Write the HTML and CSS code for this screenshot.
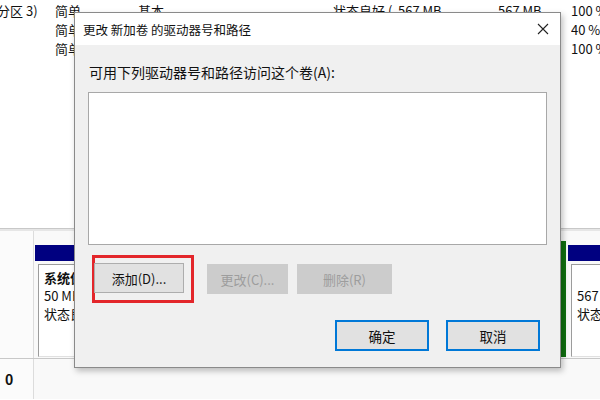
FILE: index.html
```html
<!DOCTYPE html>
<html lang="zh-CN">
<head>
<meta charset="utf-8">
<link rel="stylesheet" href="styles.css">
</head>
<body>
<div class="screen">
  <div class="vollist">
    <div class="vrow">
      <span class="c1">分区 3)</span><span class="c2">简单</span><span class="c3">基本</span><span class="c4">状态良好 (</span><span class="c5">567 MB</span><span class="c6">567 MB</span><span class="c7">100 %</span>
    </div>
    <div class="vrow">
      <span class="c1"></span><span class="c2">简单</span><span class="c3"></span><span class="c4"></span><span class="c5"></span><span class="c6"></span><span class="c7">40 %</span>
    </div>
    <div class="vrow">
      <span class="c1"></span><span class="c2">简单</span><span class="c3"></span><span class="c4"></span><span class="c5"></span><span class="c6"></span><span class="c7">100 %</span>
    </div>
  </div>
  <div class="diskmap">
    <div class="disk">
      <div class="dlabel"></div>
      <div class="parts">
        <div class="part p1">
          <div class="band"></div>
          <div class="pbody"><b>系统保留</b><span>50 MB NTFS</span><span>状态良好</span></div>
        </div>
        <div class="part p2">
          <div class="band"></div>
          <div class="pbody"><b>新加卷</b><span>100 GB NTFS</span><span>状态良好</span></div>
        </div>
        <div class="part p3">
          <div class="band"></div>
          <div class="pbody"><b>&nbsp;</b><span>567 MB</span><span>状态良好</span></div>
        </div>
      </div>
    </div>
    <div class="disk2">
      <div class="dlabel2"><b>0</b></div>
      <div class="rest"></div>
    </div>
  </div>

  <div class="dialog">
    <div class="titlebar">
      <span class="title">更改 新加卷 的驱动器号和路径</span>
      <svg class="close" width="12" height="12" viewBox="0 0 12 12"><path d="M1 1L11 11M11 1L1 11" stroke="#222" stroke-width="1.1" fill="none"/></svg>
    </div>
    <div class="dbody">
      <div class="label">可用下列驱动器号和路径访问这个卷(A):</div>
      <div class="listbox"></div>
      <div class="btnrow">
        <div class="hl"><button class="btn add">添加(D)...</button></div>
        <button class="btn dis chg">更改(C)...</button>
        <button class="btn dis del">删除(R)</button>
      </div>
      <div class="okrow">
        <button class="btn def">确定</button>
        <button class="btn def">取消</button>
      </div>
    </div>
  </div>
</div>
</body>
</html>
```
FILE: styles.css
```css
* { box-sizing: border-box; }
html, body { margin: 0; padding: 0; }
body {
  width: 600px; height: 400px; overflow: hidden;
  font-family: "Noto Sans CJK SC", "Noto Sans", sans-serif;
  font-size: 13px; color: #111; background: #fff;
}
.screen { position: relative; width: 600px; height: 400px; overflow: hidden; }
.vollist { height: 229px; background: #fff; border-bottom: 1px solid #c8c8c8; padding-top: 1px; }
.vrow { display: flex; height: 19px; line-height: 19px; white-space: nowrap; }
.vrow span { display: block; overflow: hidden; flex-shrink: 0; }
.c1 { width: 55px; text-indent: -3px; }
.c2 { width: 83px; }
.c3 { width: 195px; }
.c4 { width: 65px; }
.c5 { width: 100px; }
.c6 { width: 73px; }
.c7 { width: 40px; }
.diskmap { border-top: 2px solid #e6e6e6; background: #f7f7f7; }
.disk { display: flex; height: 128px; border-bottom: 1px solid #c8c8c8; }
.dlabel { width: 34px; flex-shrink: 0; background: #fbfbfb; border-right: 1px solid #dcdcdc; }
.parts { flex: 1; min-width: 0; display: flex; padding: 14px 0 0 1px; background: #f9f9f9; overflow: hidden; }
.part { display: flex; flex-direction: column; height: 112px; flex-shrink: 0; }
.band { height: 16px; background: #000080; }
.pbody {
  flex: 1; margin: 3px 3px 0 3px; background: #fff;
  border: 1px solid #9c9c9c; border-right-color: #e0e0e0; border-bottom-color: #e0e0e0;
  padding: 4px 5px; display: flex; flex-direction: column; line-height: 18px; white-space: nowrap; overflow: hidden;
}
.pbody b { font-weight: 700; }
.p1 { width: 230px; }
.p2 { width: 296px; }
.p3 { width: 60px; border-left: 5px solid #107010; padding-left: 2px; margin-top: -4px; padding-top: 4px; height: 116px; }
.p3 .pbody { margin: 3px 0 0 3px; }
.disk2 { display: flex; height: 40px; }
.dlabel2 { width: 34px; flex-shrink: 0; background: #fbfbfb; border-right: 1px solid #dcdcdc; padding: 10px 0 0 5px; font-size: 14px; }
.rest { flex: 1; background: #f9f9f9; }

.dialog {
  position: absolute; left: 74px; top: 12px; width: 487px; height: 356px;
  background: #f0f0f0; border: 1px solid #8a8a8a;
  box-shadow: 2px 3px 6px rgba(0,0,0,0.25);
}
.titlebar { height: 32px; background: #fff; display: flex; align-items: center; justify-content: space-between; padding: 0 10px 0 8px; }
.title { font-size: 12.5px; color: #111; }
.close { margin-right: 1px; }
.dbody { padding: 18px 0 0 13px; }
.label { font-size: 14px; line-height: 18px; height: 29px; padding-left: 1px; }
.listbox { width: 459px; height: 153px; background: #fff; border: 1px solid #a8a8a8; }
.btnrow { display: flex; align-items: center; margin-top: 10px; height: 48px; }
.hl { border: 3px solid #e3262b; padding: 5px 7px 7px 0; margin-left: 4px; }
.btn {
  font-family: inherit; font-size: 13px; height: 30px; margin: 0;
  background: #e1e1e1; border: 1px solid #adadad; color: #111; padding: 0;
}
.add { width: 90px; margin-left: -1px; }
.dis { background: #cccccc; border-color: #cccccc; color: #9d9d9d; }
.chg { width: 81px; margin-left: 13px; }
.del { width: 95px; margin-left: 9px; }
.okrow { display: flex; justify-content: flex-end; gap: 17px; padding-right: 20px; margin-top: 17px; }
.def { width: 94px; height: 31px; border: 2px solid #0078d7; font-size: 13.5px; }
```
